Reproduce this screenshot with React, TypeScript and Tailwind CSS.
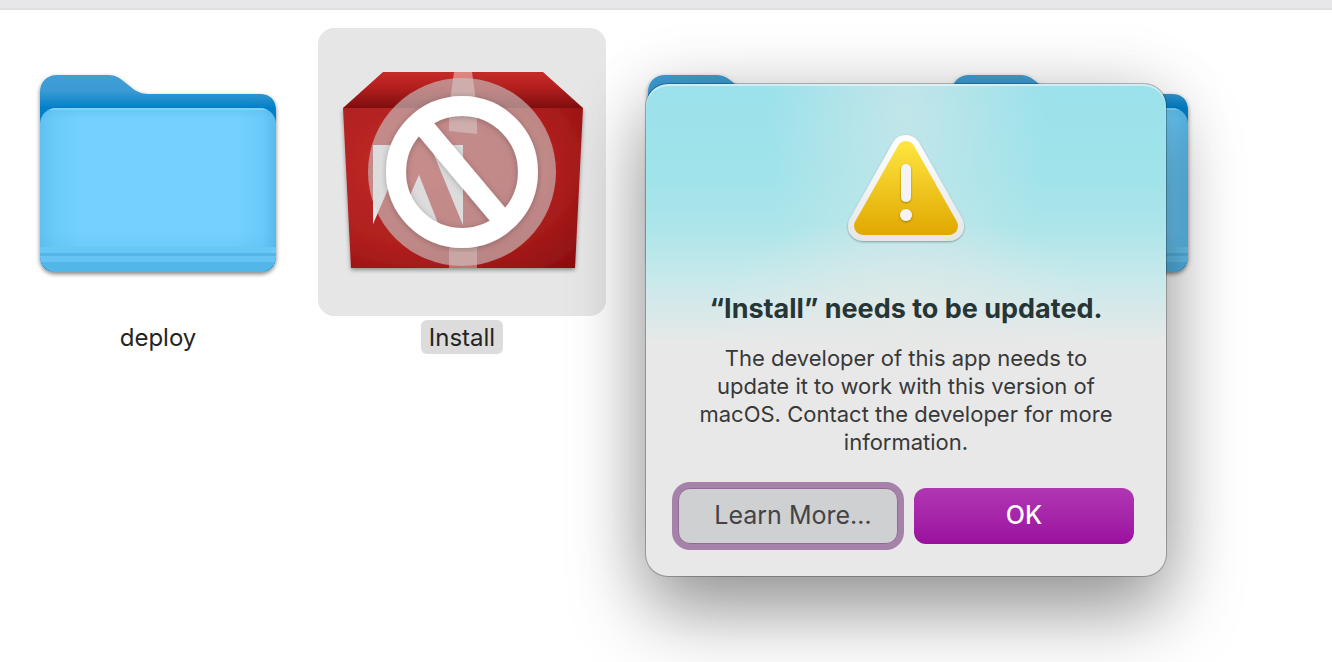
import { useId, useState } from "react";

type Item = {
  id: string;
  name?: string;
  kind: "folder" | "installer";
};

const ITEMS: Item[] = [
  { id: "deploy", name: "deploy", kind: "folder" },
  { id: "install", name: "Install", kind: "installer" },
  { id: "folder-3", kind: "folder" },
  { id: "folder-4", kind: "folder" }
];

function FolderIcon() {
  const id = useId();
  return (
    <svg viewBox="0 0 288 288" className="size-72" aria-hidden="true">
      <defs>
        <linearGradient id={`${id}back`} x1="0" y1="0" x2="0" y2="1">
          <stop offset="0" stopColor="#409fd6" />
          <stop offset="0.08" stopColor="#3b9ad4" />
          <stop offset="0.165" stopColor="#0380c9" />
          <stop offset="1" stopColor="#0380c9" />
        </linearGradient>
        <linearGradient id={`${id}front`} x1="0" y1="0" x2="1" y2="0">
          <stop offset="0" stopColor="#5fc0f1" />
          <stop offset="0.06" stopColor="#6bcaf9" />
          <stop offset="0.16" stopColor="#74d0fe" />
          <stop offset="0.84" stopColor="#74d0fe" />
          <stop offset="0.94" stopColor="#6bcaf9" />
          <stop offset="1" stopColor="#58baec" />
        </linearGradient>
        <linearGradient id={`${id}shade`} x1="0" y1="0" x2="0" y2="1">
          <stop offset="0" stopColor="#4fb3e6" stopOpacity="0.35" />
          <stop offset="0.07" stopColor="#4fb3e6" stopOpacity="0" />
          <stop offset="0.75" stopColor="#4fb3e6" stopOpacity="0" />
          <stop offset="0.85" stopColor="#4fb3e6" stopOpacity="0.2" />
        </linearGradient>
        <clipPath id={`${id}clip`}>
          <rect x="26" y="80" width="236" height="164" rx="16" />
        </clipPath>
        <filter id={`${id}shadow`} x="-10%" y="-10%" width="120%" height="120%">
          <feDropShadow dx="0" dy="2" stdDeviation="2" floodOpacity="0.5" />
        </filter>
      </defs>
      <g filter={`url(#${id}shadow)`}>
        <path
          d="M26 64C26 54 33 47 43 47H93C99 47 103 48 108 52L118 60C124 65 130 66 137 66H246C256 66 262 72 262 82V228C262 238 256 244 246 244H42C32 244 26 238 26 228Z"
          fill={`url(#${id}back)`}
        />
      </g>
      <g clipPath={`url(#${id}clip)`}>
        <rect x="26" y="80" width="236" height="164" fill={`url(#${id}front)`} />
        <rect x="26" y="80" width="236" height="164" fill={`url(#${id}shade)`} />
        <rect x="26" y="219" width="236" height="6" fill="#69c7f5" />
        <rect x="26" y="225" width="236" height="3" fill="#54b5e6" />
        <rect x="26" y="228" width="236" height="6" fill="#65c4f3" />
        <rect x="26" y="234" width="236" height="10" fill="#53b6e8" />
        <rect x="26" y="80" width="236" height="2" fill="#8fdaff" opacity="0.6" />
      </g>
    </svg>
  );
}

function InstallerIcon() {
  const id = useId();
  return (
    <svg viewBox="0 0 288 288" className="size-72" aria-hidden="true">
      <defs>
        <linearGradient id={`${id}lid`} x1="0" y1="0" x2="0" y2="1">
          <stop offset="0" stopColor="#c42a28" />
          <stop offset="0.4" stopColor="#b5201f" />
          <stop offset="1" stopColor="#7f0d0e" />
        </linearGradient>
        <radialGradient id={`${id}box`} cx="0.35" cy="0.35" r="0.9">
          <stop offset="0" stopColor="#c42c2a" />
          <stop offset="0.6" stopColor="#af1f1e" />
          <stop offset="1" stopColor="#8b0d0e" />
        </radialGradient>
        <filter id={`${id}shadow`} x="-10%" y="-10%" width="120%" height="120%">
          <feDropShadow dx="0" dy="2" stdDeviation="2" floodOpacity="0.4" />
        </filter>
        <filter id={`${id}glow`} x="-10%" y="-10%" width="120%" height="120%">
          <feDropShadow dx="0" dy="1" stdDeviation="3" floodOpacity="0.25" />
        </filter>
      </defs>
      <path
        d="M25 80H265L257 240H33Z"
        fill={`url(#${id}box)`}
        filter={`url(#${id}shadow)`}
      />
      <path d="M65 44H225L265 80H25Z" fill={`url(#${id}lid)`} />
      {/* packing tape */}
      <path d="M136 44H154L159 80V106L131 103V80Z" fill="#e5a3a2" opacity="0.75" />
      <path d="M131 205H159V240H131Z" fill="#e5a3a2" opacity="0.6" />
      <path
        d="M55 117H89L55 196ZM112 117H145V197ZM101 147L121 198H106L99 181H86Z"
        fill="#e8e8e8"
      />
      <circle cx="144" cy="144" r="94" fill="#c8c8c8" opacity="0.62" />
      <path
        d="M55 117H89L55 196ZM112 117H145V197ZM101 147L121 198H106L99 181H86Z"
        fill="#e4e4e4"
        opacity="0.5"
      />
      <g filter={`url(#${id}glow)`} stroke="#fff" strokeWidth="20" fill="none">
        <circle cx="144" cy="144" r="66" />
        <path d="M102 94L186 194" />
      </g>
    </svg>
  );
}

function WarningIcon() {
  const id = useId();
  return (
    <svg viewBox="0 0 128 128" className="size-32" aria-hidden="true">
      <defs>
        <linearGradient id={`${id}fill`} gradientUnits="userSpaceOnUse" x1="0" y1="17" x2="0" y2="111">
          <stop offset="0" stopColor="#ffe641" />
          <stop offset="1" stopColor="#e0a800" />
        </linearGradient>
        <linearGradient id={`${id}rim`} gradientUnits="userSpaceOnUse" x1="0" y1="11" x2="0" y2="117">
          <stop offset="0" stopColor="#ffffff" />
          <stop offset="1" stopColor="#e6e6e6" />
        </linearGradient>
        <filter
          id={`${id}shadow`}
          filterUnits="userSpaceOnUse"
          x="0"
          y="0"
          width="128"
          height="128"
        >
          <feDropShadow dx="0" dy="1" stdDeviation="1" floodOpacity="0.35" />
        </filter>
      </defs>
      <path
        d="M64 26L107 102H21Z"
        fill={`url(#${id}rim)`}
        stroke={`url(#${id}rim)`}
        strokeWidth="30"
        strokeLinejoin="round"
        filter={`url(#${id}shadow)`}
      />
      <path
        d="M64 26L107 102H21Z"
        fill={`url(#${id}fill)`}
        stroke={`url(#${id}fill)`}
        strokeWidth="18"
        strokeLinejoin="round"
      />
      <g fill="#f4f4f4" filter={`url(#${id}shadow)`}>
        <rect x="59" y="40" width="10" height="38" rx="5" />
        <circle cx="64" cy="91" r="6" />
      </g>
    </svg>
  );
}

function FinderItem({
  item,
  selected,
  onSelect
}: {
  item: Item;
  selected: boolean;
  onSelect: () => void;
}) {
  return (
    <button
      type="button"
      onClick={onSelect}
      className="flex shrink-0 flex-col items-center gap-1 text-[24px] leading-8 text-[#242424] outline-none"
    >
      <span className={`rounded-2xl ${selected ? "bg-[#e6e6e6]" : ""}`}>
        {item.kind === "folder" ? <FolderIcon /> : <InstallerIcon />}
      </span>
      {item.name && (
        <span className={`rounded-md px-2 pt-0.5 ${selected ? "bg-[#dcdcdc]" : ""}`}>
          {item.name}
        </span>
      )}
    </button>
  );
}

export default function App() {
  const [selectedId, setSelectedId] = useState("install");
  const [open, setOpen] = useState(true);

  return (
    <div className="relative min-h-screen overflow-hidden bg-white font-['Inter','Liberation_Sans',sans-serif]">
      <header className="h-[10px] border-b-2 border-[#dfdfdf] bg-[#e7e7e9]" />
      <main className="flex items-start gap-4 px-3.5 pt-[18px]">
        {ITEMS.map((item) => (
          <FinderItem
            key={item.id}
            item={item}
            selected={item.id === selectedId}
            onSelect={() => setSelectedId(item.id)}
          />
        ))}
      </main>

      {open && (
        <div
          role="alertdialog"
          aria-labelledby="alert-title"
          aria-describedby="alert-text"
          className="absolute top-[84px] left-[646px] flex w-[520px] flex-col items-center rounded-[22px] bg-[#e8e8e8] bg-[radial-gradient(ellipse_200px_110px_at_50%_240px,rgba(230,232,230,0.75),rgba(230,232,230,0.35)_50%,rgba(230,232,230,0)),radial-gradient(ellipse_140px_260px_at_50%_30px,rgba(218,232,233,0.6),rgba(218,232,233,0.35)_45%,rgba(218,232,233,0)),linear-gradient(to_bottom,#9be1eb_0,#a0e3ea_90px,#abe5ea_140px,#c8e9eb_195px,#e8e8e8_260px)] px-8 pt-10 pb-8 shadow-[0_0_0_1px_rgba(0,0,0,0.25),0_36px_76px_rgba(0,0,0,0.38),0_0_70px_rgba(0,0,0,0.12),inset_0_2px_1px_rgba(255,255,255,0.5)]"
        >
          <WarningIcon />
          <h1
            id="alert-title"
            className="mt-10 text-[27px] leading-[34px] font-bold text-[#263535]"
          >
            “Install” needs to be updated.
          </h1>
          <p
            id="alert-text"
            className="mt-[18px] max-w-[430px] text-center text-[22px] leading-7 text-[#383838]"
          >
            The developer of this app needs to update it to work with this version of
            macOS. Contact the developer for more information.
          </p>
          <div className="mt-8 grid w-full grid-cols-2 gap-4 text-[25px]">
            <button
              type="button"
              className="h-14 rounded-xl border border-[#936b98] bg-[#cfd0d2] pl-2.5 text-[#444446] ring-6 ring-[#a681aa] outline-none"
            >
              Learn More…
            </button>
            <button
              type="button"
              onClick={() => setOpen(false)}
              className="h-14 rounded-xl bg-linear-to-b from-[#b036b2] to-[#9b0e9f] font-medium text-white"
            >
              OK
            </button>
          </div>
        </div>
      )}
    </div>
  );
}
